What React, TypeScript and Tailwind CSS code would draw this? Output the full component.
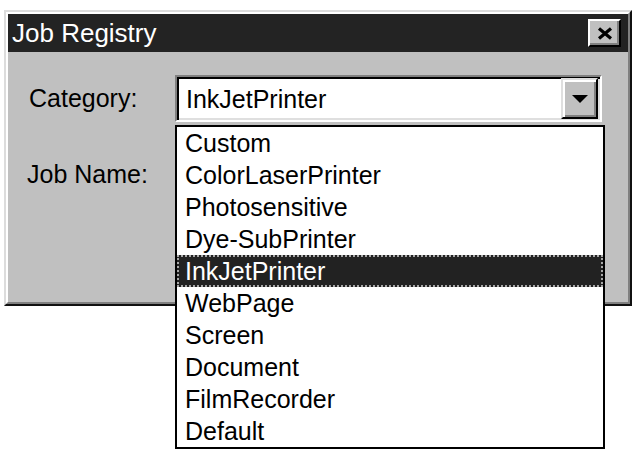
import React from 'react';

const categories = [
  'Custom',
  'ColorLaserPrinter',
  'Photosensitive',
  'Dye-SubPrinter',
  'InkJetPrinter',
  'WebPage',
  'Screen',
  'Document',
  'FilmRecorder',
  'Default',
];

const selected = 'InkJetPrinter';

function CloseButton() {
  return (
    <button className="flex h-[28px] w-[33px] items-center justify-center border-2 border-t-white border-l-white border-b-black border-r-black bg-[#c0c0c0] shadow-[inset_-2px_-2px_0_#808080]">
      <svg width="16" height="13" viewBox="0 0 16 13">
        <path d="M2 1.5 L14 11.5 M14 1.5 L2 11.5" stroke="#000" strokeWidth="3.2" />
      </svg>
    </button>
  );
}

function ArrowButton() {
  return (
    <div className="flex h-full w-[37px] items-center justify-center border-2 border-t-[#dfdfdf] border-l-[#dfdfdf] border-b-black border-r-black bg-[#c0c0c0] shadow-[inset_2px_2px_0_#fff,inset_-2px_-2px_0_#808080]">
      <svg width="16" height="8" viewBox="0 0 16 8">
        <polygon points="0,0 16,0 8,8" fill="#000" />
      </svg>
    </div>
  );
}

function CategoryList() {
  return (
    <ul className="absolute left-0 top-full z-10 mt-[3px] w-[430px] border-2 border-black bg-white">
      {categories.map(cat =>
        cat === selected ? (
          <li
            key={cat}
            className="h-[32px] border-2 border-dotted border-[#a8a8a8] bg-[#222] pl-[6px] leading-[28px] text-white"
          >
            {cat}
          </li>
        ) : (
          <li key={cat} className="h-[32px] pl-[8px] leading-[32px] text-black">
            {cat}
          </li>
        )
      )}
    </ul>
  );
}

export default function App() {
  return (
    <div className="h-[459px] w-[640px] overflow-hidden bg-white pl-[4px] pt-[10px] font-['Liberation_Sans',Arial,sans-serif] text-[25px]">
      <div className="w-[628px] border-2 border-t-[#dcdcdc] border-l-[#dcdcdc] border-b-[#111] border-r-[#111] bg-[#c0c0c0]">
        <div className="border-2 border-t-white border-l-white border-b-[#808080] border-r-[#808080]">
          {/* title bar */}
          <div className="flex h-[38px] items-center justify-between bg-[#232323] pl-[4px] pr-[7px]">
            <span className="text-[26px] leading-none text-white">Job Registry</span>
            <CloseButton />
          </div>

          {/* form */}
          <div className="flex h-[250px] flex-col gap-[29px] pt-[23px]">
            <div className="flex h-[47px] items-center">
              <span className="w-[167px] pl-[21px] text-black">Category:</span>
              <div className="relative">
                <div className="flex h-[47px] w-[427px] border-2 border-t-[#808080] border-l-[#808080] border-b-white border-r-white bg-white shadow-[inset_2px_2px_0_#000,inset_-2px_-2px_0_#dfdfdf]">
                  <span className="flex-1 pl-[9px] pt-[2px] leading-[41px] text-black">{selected}</span>
                  <div className="py-[1px] pr-[2px] pt-[1px]">
                    <ArrowButton />
                  </div>
                </div>
                <CategoryList />
              </div>
            </div>
            <div className="flex h-[47px] items-center">
              <span className="w-[167px] pl-[19px] text-black">Job Name:</span>
              <div className="h-[47px] w-[427px] border-2 border-t-[#808080] border-l-[#808080] border-b-white border-r-white bg-white shadow-[inset_2px_2px_0_#000,inset_-2px_-2px_0_#dfdfdf]" />
            </div>
          </div>
        </div>
      </div>
    </div>
  );
}
